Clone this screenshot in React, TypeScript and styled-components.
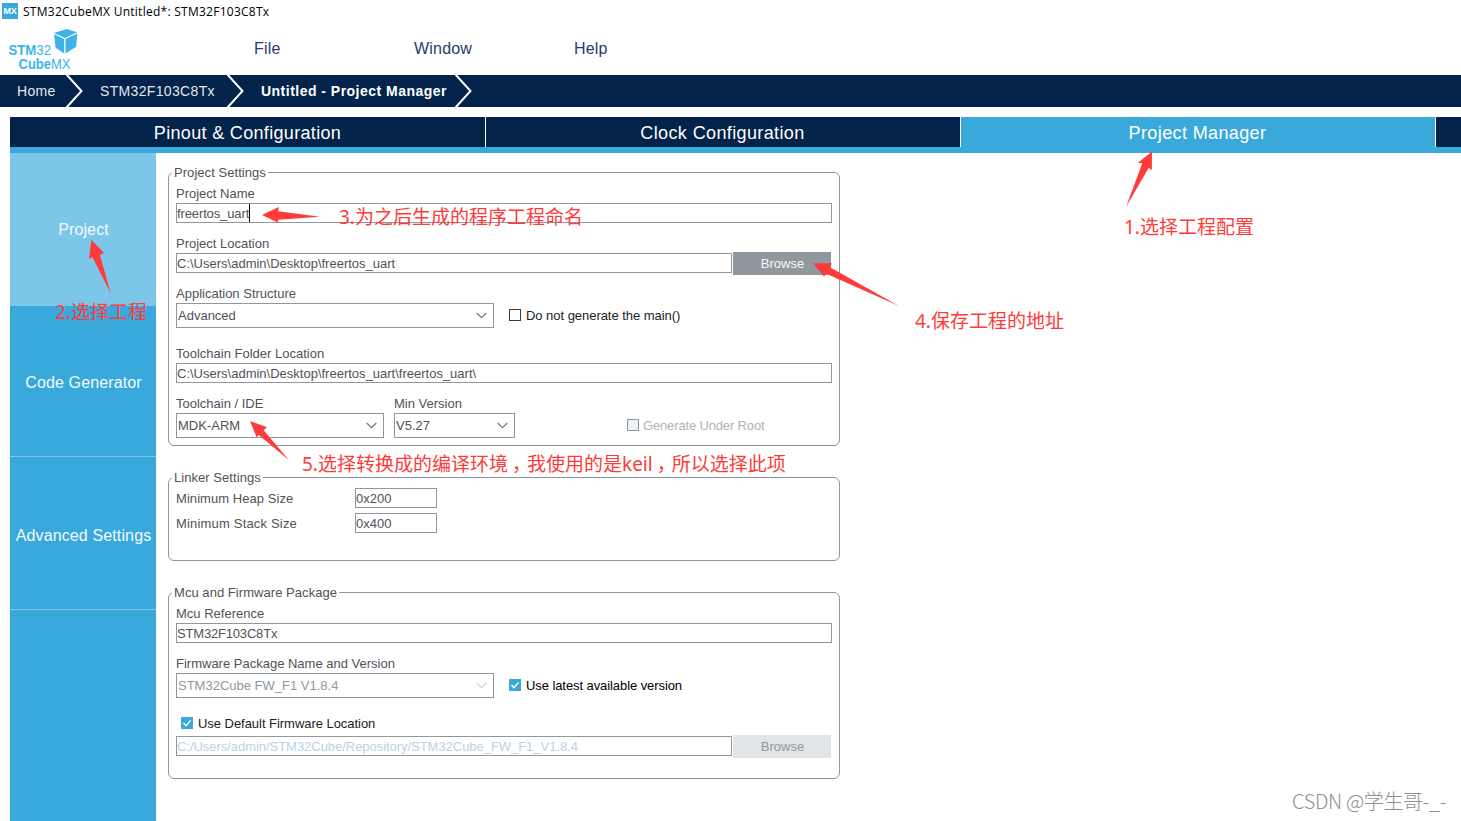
import React from "react";
import styled, { createGlobalStyle, css } from "styled-components";

const NAVY = "#03234b";
const BLUE = "#39a9dc";
const LIGHT_BLUE = "#7cc6e9";
const GREY = "#90989e";
const RED = "#fe3b3a";

const GlobalStyle = createGlobalStyle`
  * { box-sizing: border-box; }
  html, body { margin: 0; padding: 0; background: #fff; overflow: hidden; }
  body { font-family: "Liberation Sans", Arial, sans-serif; font-size: 13px; color: #525256; }
`;

const Window = styled.div`
  position: relative;
  display: flex;
  flex-direction: column;
  width: 1461px;
  height: 821px;
  overflow: hidden;
  white-space: nowrap;
`;

const TitleBar = styled.div`
  display: flex;
  align-items: center;
  gap: 5px;
  height: 22px;
  padding-left: 2px;
  font: 12px/22px "Open Sans", "Noto Sans", sans-serif;
  color: #000;
`;

const AppBadge = styled.span`
  width: 16px;
  height: 16px;
  background: ${BLUE};
  color: #fff;
  font: bold 9px/16px "Liberation Sans", sans-serif;
  letter-spacing: -0.2px;
  text-align: center;
`;

const TitleText = styled.span`
  padding-top: 2px;
  letter-spacing: 0.26px;
`;

const MenuBar = styled.nav`
  display: flex;
  height: 53px;
  font-size: 16px;
  line-height: 54px;
  color: #2b3a6b;
`;

const LogoSlot = styled.div`
  width: 254px;
  height: 53px;
`;

const MenuItem = styled.span`
  width: 160px;
  letter-spacing: 0.2px;
`;

const Breadcrumb = styled.div`
  display: flex;
  height: 32px;
  background: ${NAVY};
  color: #fff;
  font-size: 14px;
  line-height: 32px;
`;

const Crumb = styled.span<{ $width: number; $indent: number; $strong?: boolean }>`
  width: ${(p) => p.$width}px;
  padding-left: ${(p) => p.$indent}px;
  letter-spacing: ${(p) => (p.$strong ? 0.48 : 0.34)}px;
  color: ${(p) => (p.$strong ? "#fff" : "#e3e8ee")};
  font-weight: ${(p) => (p.$strong ? 700 : 400)};
`;

const Workspace = styled.main`
  flex: 1;
  display: flex;
  flex-direction: column;
  padding: 10px 0 0 10px;
`;

const Tabs = styled.div`
  display: flex;
  height: 36px;
  background: ${NAVY};
  border-bottom: 6px solid ${BLUE};
`;

const Tab = styled.div<{ $active?: boolean; $first?: boolean }>`
  width: ${(p) => (p.$first ? 476 : 475)}px;
  height: 30px;
  border-right: 1px solid #fff;
  background: ${(p) => (p.$active ? BLUE : NAVY)};
  color: #fff;
  font-size: 18px;
  line-height: 32px;
  letter-spacing: ${(p) => (p.$first ? 0.33 : 0.38)}px;
  text-align: center;
  text-indent: ${(p) => (p.$first ? 0 : -1)}px;
`;

const Body = styled.div`
  flex: 1;
  display: flex;
`;

const Sidebar = styled.aside`
  width: 146px;
  background: ${BLUE};
`;

const SideItem = styled.div<{ $active?: boolean; $height: number }>`
  height: ${(p) => p.$height}px;
  line-height: ${(p) => (p.$height === 153 && !p.$active ? 157 : 153)}px;
  ${(p) =>
    p.$active
      ? css`
          background: ${LIGHT_BLUE};
        `
      : css`
          border-bottom: 1px solid ${LIGHT_BLUE};
        `}
  color: #f4fafd;
  font-size: 16px;
  letter-spacing: 0.13px;
  text-align: center;
  text-indent: 1px;
`;

const Content = styled.section`
  display: flex;
  flex-direction: column;
  gap: 31px;
  padding: 19px 0 0 12px;
`;

const Group = styled.div<{ $height: number }>`
  width: 672px;
  height: ${(p) => p.$height}px;
  padding: 0 7px;
  border: 1px solid ${GREY};
  border-radius: 6px;
`;

const Legend = styled.div`
  width: fit-content;
  height: 16px;
  margin: -9px 0 0 -4px;
  padding: 0 2px;
  line-height: 17px;
  letter-spacing: 0.05px;
  background: #fff;
`;

const Field = styled.div<{ $top?: number }>`
  margin-top: ${(p) => p.$top ?? 12}px;
`;

const Label = styled.div`
  height: 18px;
  line-height: 17px;
`;

const Row = styled.div<{ $gap?: number; $top?: number }>`
  display: flex;
  align-items: center;
  gap: ${(p) => p.$gap ?? 0}px;
  margin-top: ${(p) => p.$top ?? 0}px;
`;

const RowLabel = styled.span<{ $tracking: number }>`
  width: 179px;
  letter-spacing: ${(p) => p.$tracking}px;
`;

const TextBox = styled.div<{ $width?: number; $disabled?: boolean; $tracking?: number }>`
  display: flex;
  align-items: center;
  width: ${(p) => p.$width ?? 656}px;
  height: 20px;
  padding-top: 1px;
  border: 1px solid ${GREY};
  color: ${(p) => (p.$disabled ? "#b9d2e6" : "#525256")};
  letter-spacing: ${(p) => p.$tracking ?? 0}px;
  line-height: 18px;
`;

const Caret = styled.span`
  width: 1px;
  height: 18px;
  margin-top: -1px;
  background: #000;
`;

const SelectBox = styled.div<{ $width: number; $disabled?: boolean }>`
  display: flex;
  align-items: center;
  justify-content: space-between;
  width: ${(p) => p.$width}px;
  height: 25px;
  padding: 0 6px 0 1px;
  border: 1px solid ${GREY};
  color: ${(p) => (p.$disabled ? "#90989e" : "#525256")};
`;

const Button = styled.div<{ $disabled?: boolean }>`
  width: 98px;
  height: 23px;
  margin: -1px 0 -2px;
  background: ${(p) => (p.$disabled ? "#e1e5e8" : GREY)};
  color: ${(p) => (p.$disabled ? "#90989e" : "#f7f8f8")};
  line-height: 23px;
  text-align: center;
  text-indent: 1px;
`;

const Check = styled.div<{ $left: number; $gap?: number; $color?: string; $tracking?: number }>`
  display: flex;
  align-items: center;
  gap: ${(p) => p.$gap ?? 5}px;
  height: 16px;
  margin-left: ${(p) => p.$left}px;
  color: ${(p) => p.$color ?? "#222"};
  letter-spacing: ${(p) => p.$tracking ?? -0.04}px;
`;

const Box = styled.span<{ $checked?: boolean; $disabled?: boolean }>`
  display: flex;
  width: 12px;
  height: 12px;
  border: ${(p) => (p.$checked ? "none" : `1px solid ${p.$disabled ? GREY : "#3c3c3f"}`)};
  background: ${(p) => (p.$checked ? BLUE : p.$disabled ? "#eef1f3" : "#fff")};
`;

const SelectRow = styled(Row)`
  & ${Box} {
    margin-top: -1px;
  }
`;

const Overlay = styled.svg`
  position: absolute;
  inset: 0;
  pointer-events: none;
`;

const Note = styled.span<{ $x: number; $y: number }>`
  position: absolute;
  left: ${(p) => p.$x}px;
  top: ${(p) => p.$y}px;
  color: ${RED};
  font: 19px/28px "Noto Sans", "Noto Sans CJK SC", sans-serif;
`;

const Comma = styled.span`
  padding: 0 5.5px 0 4px;
  font-feature-settings: "halt";
`;

const Watermark = styled.span`
  position: absolute;
  left: 1292px;
  top: 787px;
  color: #8f8f8f;
  font: 300 20px/28px "Noto Sans CJK SC", sans-serif;
  letter-spacing: -0.35px;
`;

const Separator = () => (
  <svg width="18" height="32" viewBox="0 0 18 32">
    <path d="M0.5 -0.5 L15.5 16 L0.5 32.5" fill="none" stroke="#fff" strokeWidth="2" />
  </svg>
);

const Tick = () => (
  <svg width="12" height="12" viewBox="0 0 12 12">
    <path d="M2.5 6 L5 8.6 L9.6 3.4" fill="none" stroke="#fff" strokeWidth="1.4" />
  </svg>
);

const Arrow = ({ faded }: { faded?: boolean }) => (
  <svg width="11" height="7" viewBox="0 0 11 7">
    <path d="M0.7 1 L5.5 5.6 L10.3 1" fill="none" stroke={faded ? "#cfd3d6" : "#72777b"} strokeWidth="1.2" />
  </svg>
);

const Logo = () => (
  <svg width="90" height="53" viewBox="0 22 90 53" fontFamily="Liberation Sans, sans-serif" fontSize="15" fill="#3cb4e7">
    <path d="M54 32.9 L66.4 29 L77.2 32.2 L64.9 37.9 Z" />
    <path d="M54 34.2 L64.2 39 L64.2 53.4 L55.6 47.8 Z" />
    <path d="M65.5 39 L77.3 33.6 L76.2 46.8 L65.5 53.4 Z" />
    <text x="8.5" y="54.7" textLength="42.5" lengthAdjust="spacingAndGlyphs">
      <tspan fontWeight="700">STM</tspan>32
    </text>
    <text x="18.5" y="69" textLength="52" lengthAdjust="spacingAndGlyphs">
      <tspan fontWeight="700">Cube</tspan>MX
    </text>
  </svg>
);

const arrows = [
  "1152,151.5 1138,162.7 1142.3,163.3 1126,207 1148.6,168 1151.8,170",
  "91.3,240 104,252.7 100,255.3 110.8,293.5 92.5,257.3 89,258.7",
  "262,215 278.7,207 278.2,211.3 320,216.7 278,219.7 278.3,222.7",
  "813,263.2 831.8,263.2 830.4,267.5 899,306 826.3,273.7 824,276.4",
  "250,421 267,427.3 263.7,430.3 288.8,460 258.7,435 256.7,437.5",
];

const notes = [
  { x: 1124, y: 213, text: "1.选择工程配置" },
  { x: 55, y: 298, text: "2.选择工程" },
  { x: 339, y: 203, text: "3.为之后生成的程序工程命名" },
  { x: 915, y: 307, text: "4.保存工程的地址" },
  { x: 302, y: 450, text: "5.选择转换成的编译环境，我使用的是keil，所以选择此项" },
];

const renderNote = (text: string) =>
  text.split("，").map((part, i) => (
    <React.Fragment key={part}>
      {i > 0 && <Comma>，</Comma>}
      {part}
    </React.Fragment>
  ));

export default function App() {
  return (
    <Window>
      <GlobalStyle />
      <TitleBar>
        <AppBadge>MX</AppBadge>
        <TitleText>STM32CubeMX Untitled*: STM32F103C8Tx</TitleText>
      </TitleBar>
      <MenuBar>
        <LogoSlot>
          <Logo />
        </LogoSlot>
        <MenuItem>File</MenuItem>
        <MenuItem>Window</MenuItem>
        <MenuItem>Help</MenuItem>
      </MenuBar>
      <Breadcrumb>
        <Crumb $width={66} $indent={17}>Home</Crumb>
        <Separator />
        <Crumb $width={143} $indent={16}>STM32F103C8Tx</Crumb>
        <Separator />
        <Crumb $width={210} $indent={16} $strong>Untitled - Project Manager</Crumb>
        <Separator />
      </Breadcrumb>
      <Workspace>
        <Tabs>
          <Tab $first>Pinout &amp; Configuration</Tab>
          <Tab>Clock Configuration</Tab>
          <Tab $active>Project Manager</Tab>
        </Tabs>
        <Body>
          <Sidebar>
            <SideItem $height={153} $active>Project</SideItem>
            <SideItem $height={151}>Code Generator</SideItem>
            <SideItem $height={153}>Advanced Settings</SideItem>
          </Sidebar>
          <Content>
            <Group $height={274}>
              <Legend>Project Settings</Legend>
              <Field $top={5}>
                <Label>Project Name</Label>
                <TextBox $tracking={-0.12}>freertos_uart<Caret /></TextBox>
              </Field>
              <Field>
                <Label>Project Location</Label>
                <Row $gap={1}>
                  <TextBox $width={556}>C:\Users\admin\Desktop\freertos_uart</TextBox>
                  <Button>Browse</Button>
                </Row>
              </Field>
              <Field>
                <Label>Application Structure</Label>
                <SelectRow>
                  <SelectBox $width={318}>Advanced<Arrow /></SelectBox>
                  <Check $left={15}><Box />Do not generate the main()</Check>
                </SelectRow>
              </Field>
              <Field $top={17}>
                <Label>Toolchain Folder Location</Label>
                <TextBox>C:\Users\admin\Desktop\freertos_uart\freertos_uart\</TextBox>
              </Field>
              <Row $gap={10} $top={12}>
                <Field $top={0}>
                  <Label>Toolchain / IDE</Label>
                  <SelectBox $width={208}>MDK-ARM<Arrow /></SelectBox>
                </Field>
                <Field $top={0}>
                  <Label>Min Version</Label>
                  <SelectBox $width={121}>V5.27<Arrow /></SelectBox>
                </Field>
                <Field $top={17}>
                  <Check $left={102} $gap={4} $color="#b1b3b6" $tracking={-0.15}><Box $disabled />Generate Under Root</Check>
                </Field>
              </Row>
            </Group>
            <Group $height={84}>
              <Legend>Linker Settings</Legend>
              <Row $top={3}>
                <RowLabel $tracking={0.06}>Minimum Heap Size</RowLabel>
                <TextBox $width={82}>0x200</TextBox>
              </Row>
              <Row $top={5}>
                <RowLabel $tracking={0.18}>Minimum Stack Size</RowLabel>
                <TextBox $width={82}>0x400</TextBox>
              </Row>
            </Group>
            <Group $height={187}>
              <Legend>Mcu and Firmware Package</Legend>
              <Field $top={5}>
                <Label>Mcu Reference</Label>
                <TextBox $tracking={-0.18}>STM32F103C8Tx</TextBox>
              </Field>
              <Field>
                <Label>Firmware Package Name and Version</Label>
                <SelectRow>
                  <SelectBox $width={318} $disabled>STM32Cube FW_F1 V1.8.4<Arrow faded /></SelectBox>
                  <Check $left={15} $color="#000" $tracking={-0.08}><Box $checked><Tick /></Box>Use latest available version</Check>
                </SelectRow>
              </Field>
              <Field $top={17}>
                <Check $left={5}><Box $checked><Tick /></Box>Use Default Firmware Location</Check>
              </Field>
              <Row $gap={1} $top={5}>
                <TextBox $width={556} $disabled $tracking={-0.04}>C:/Users/admin/STM32Cube/Repository/STM32Cube_FW_F1_V1.8.4</TextBox>
                <Button $disabled>Browse</Button>
              </Row>
            </Group>
          </Content>
        </Body>
      </Workspace>
      <Overlay width="1461" height="821" viewBox="0 0 1461 821">
        {arrows.map((points) => (
          <polygon key={points} points={points} fill={RED} />
        ))}
      </Overlay>
      {notes.map((n) => (
        <Note key={n.text} $x={n.x} $y={n.y}>{renderNote(n.text)}</Note>
      ))}
      <Watermark>CSDN @学生哥-_-</Watermark>
    </Window>
  );
}
